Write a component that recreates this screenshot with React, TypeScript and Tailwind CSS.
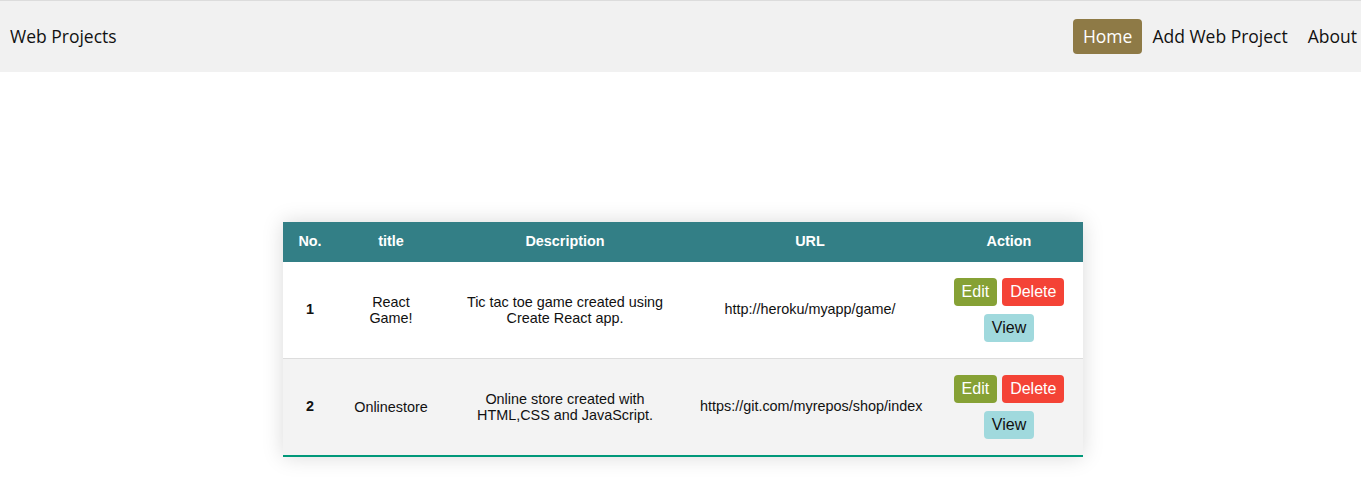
import React from "react";

type Project = { no: number; title: string; description: string; url: string };

const projects: Project[] = [
  { no: 1, title: "React Game!", description: "Tic tac toe game created using Create React app.", url: "http://heroku/myapp/game/" },
  { no: 2, title: "Onlinestore", description: "Online store created with HTML,CSS and JavaScript.", url: "https://git.com/myrepos/shop/index" },
];

function Navbar() {
  return (
    <header className="border-t border-[#dcdcdc] bg-[#f1f1f1] h-[72px] flex items-center justify-between font-['Open_Sans',sans-serif] text-[17.5px] text-[#111]">
      <div className="pl-[10px]">Web Projects</div>
      <nav className="flex items-center mr-[-6px]">
        <a className="rounded-[4px] bg-[#8e7a46] text-white px-[10px] h-[35px] flex items-center">Home</a>
        <a className="px-[10px] h-[35px] flex items-center">Add Web Project</a>
        <a className="px-[10px] h-[35px] flex items-center">About</a>
      </nav>
    </header>
  );
}

function Btn({ children, color }: { children: React.ReactNode; color: string }) {
  return (
    <button className={"h-[28px] px-[8px] rounded-[4px] text-[16px] leading-none " + color}>{children}</button>
  );
}

export default function App() {
  return (
    <div className="min-h-screen bg-white">
      <Navbar />
      <div className="pt-[150px]">
        <table className="ml-[283px] w-[800px] table-fixed border-collapse shadow-[0_0_20px_rgba(0,0,0,0.15)] font-['Liberation_Sans',Arial,sans-serif] text-[14.4px] text-[#111]">
          <colgroup>
            <col className="w-[54px]" />
            <col className="w-[108px]" />
            <col className="w-[240px]" />
            <col className="w-[250px]" />
            <col className="w-[148px]" />
          </colgroup>
          <thead>
            <tr className="bg-[#337f86] text-white h-[40px]">
              <th className="px-[15px] font-bold">No.</th>
              <th className="px-[15px] font-bold">title</th>
              <th className="px-[15px] font-bold">Description</th>
              <th className="px-[15px] font-bold">URL</th>
              <th className="px-[15px] font-bold">Action</th>
            </tr>
          </thead>
          <tbody>
            {projects.map((p, i) => (
              <tr
                key={p.no}
                className={
                  i % 2 === 1
                    ? "bg-[#f3f3f3] border-b-2 border-[#009879]"
                    : "bg-white border-b border-[#dddddd]"
                }
              >
                <td className="px-[15px] text-center font-bold">{p.no}</td>
                <td className="px-[15px] text-center leading-[16px]">{p.title}</td>
                <td className="px-[15px] text-center leading-[16px]">{p.description}</td>
                <td className="px-[15px] text-center">{p.url}</td>
                <td className="px-[15px] py-[16px]">
                  <div className="flex flex-col items-center gap-[8px]">
                    <div className="flex gap-[5px]">
                      <Btn color="bg-[#86a135] text-white">Edit</Btn>
                      <Btn color="bg-[#f44336] text-white">Delete</Btn>
                    </div>
                    <Btn color="bg-[#a0d9dd] text-[#111]">View</Btn>
                  </div>
                </td>
              </tr>
            ))}
          </tbody>
        </table>
      </div>
    </div>
  );
}
